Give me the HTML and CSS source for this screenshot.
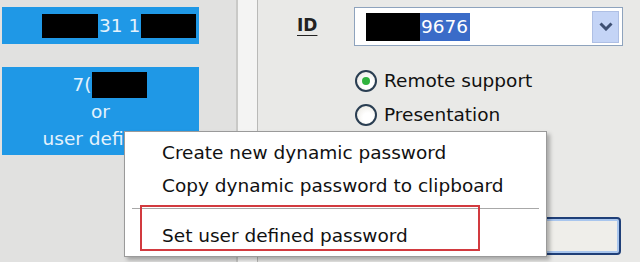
FILE: index.html
```html
<!DOCTYPE html>
<html>
<head>
<meta charset="utf-8">
<link rel="stylesheet" href="styles.css">
</head>
<body>
<div class="app">
  <div class="left-panel">
    <div class="blue-box box-id">
      <span class="redact r1"></span><span class="bt">31 1</span><span class="redact r2"></span>
    </div>
    <div class="blue-box box-pw">
      <div class="line first"><span class="bt">7(</span><span class="redact r3"></span></div>
      <div class="line">or</div>
      <div class="line">user defined</div>
    </div>
  </div>
  <div class="strip"></div>
  <div class="main">
    <div class="id-row">
      <span class="id-label">ID</span>
      <div class="combo">
        <div class="sel"><span class="redact r4"></span><span class="sel-text">9676</span></div>
        <div class="drop">
          <svg width="14" height="9" viewBox="0 0 14 9"><path d="M1.5 1.5 L7 7 L12.5 1.5" fill="none" stroke="#3d4f72" stroke-width="3"/></svg>
        </div>
      </div>
    </div>
    <div class="radios">
      <div class="radio-row"><span class="radio checked"></span><span class="rlabel">Remote support</span></div>
      <div class="radio-row"><span class="radio"></span><span class="rlabel">Presentation</span></div>
    </div>
    <div class="btn-row"><div class="btn"></div></div>
  </div>
</div>
<div class="menu">
  <div class="item">Create new dynamic password</div>
  <div class="item">Copy dynamic password to clipboard</div>
  <div class="sep"></div>
  <div class="item">Set user defined password</div>
  <div class="highlight"></div>
</div>
</body>
</html>
```
FILE: styles.css
```css
html, body {
  margin: 0;
  padding: 0;
}
body {
  width: 640px;
  height: 262px;
  overflow: hidden;
  position: relative;
  background: #e9e9e7;
  font-family: "DejaVu Sans", sans-serif;
  font-size: 18.5px;
  color: #111;
}
.app {
  display: flex;
  height: 262px;
}
.left-panel {
  width: 234px;
  background: #e1e1e0;
  padding: 7px 0 0 2px;
  border-right: 2px solid #c9c9c7;
  display: flex;
  flex-direction: column;
  gap: 23px;
}
.blue-box {
  width: 197px;
  background: #1f98e6;
  color: #e4f2fc;
  box-sizing: border-box;
  white-space: nowrap;
}
.box-id {
  height: 37px;
  display: flex;
  align-items: center;
  padding-left: 40px;
}
.redact {
  display: inline-block;
  background: #000;
}
.r1 { width: 56px; height: 24px; margin-right: 1px; }
.r2 { width: 55px; height: 24px; margin-left: 1px; }
.box-pw {
  height: 88px;
  display: flex;
  flex-direction: column;
  align-items: center;
  padding-top: 4px;
  line-height: 28px;
}
.box-pw .line {
  display: flex;
  align-items: center;
  height: 27px;
}
.box-pw .first {
  padding-left: 18px;
}
.r3 { width: 55px; height: 26px; }
.strip {
  width: 19px;
  background: #f4f4f3;
  border-right: 1px solid #b9b9b7;
}
.main {
  flex: 1;
  display: flex;
  flex-direction: column;
  padding: 7px 17px 0 39px;
}
.id-row {
  display: flex;
  align-items: center;
  height: 39px;
}
.id-label {
  width: 57px;
  font-weight: bold;
  text-decoration: underline;
  text-underline-offset: 4px;
  color: #222;
  font-size: 17px;
  margin-top: -4px;
}
.combo {
  flex: 1;
  height: 39px;
  box-sizing: border-box;
  border: 1px solid #8ea3bd;
  background: #fff;
  display: flex;
  align-items: center;
  padding: 0 3px 0 11px;
}
.sel {
  display: flex;
  align-items: center;
  height: 28px;
  width: 104px;
  background: #3a6bc8;
  color: #fff;
}
.r4 { width: 54px; height: 28px; }
.sel-text { padding-left: 1px; }
.drop {
  margin-left: auto;
  width: 27px;
  height: 32px;
  box-sizing: border-box;
  background: #c4d4f6;
  border: 1px solid #aebfe4;
  display: flex;
  align-items: center;
  justify-content: center;
}
.radios {
  margin-top: 23px;
  padding-left: 58px;
  display: flex;
  flex-direction: column;
  gap: 11px;
}
.radio-row {
  display: flex;
  align-items: center;
  height: 23px;
}
.radio {
  width: 22px;
  height: 22px;
  box-sizing: border-box;
  border: 2px solid #2a3e52;
  border-radius: 50%;
  background: radial-gradient(circle at 60% 65%, #ffffff 30%, #e6e4dc 100%);
  margin-right: 7px;
  display: flex;
  align-items: center;
  justify-content: center;
}
.radio.checked::after {
  content: "";
  width: 8px;
  height: 8px;
  border-radius: 50%;
  background: #2fb23d;
}
.rlabel {
  color: #111;
}
.btn-row {
  margin-top: auto;
  margin-bottom: 7px;
  display: flex;
  justify-content: flex-end;
  padding-right: 2px;
}
.btn {
  width: 90px;
  height: 38px;
  box-sizing: border-box;
  border: 2px solid #1f3f78;
  border-radius: 4px;
  background: #efeeea;
  box-shadow: inset 0 0 0 2px #a9c6ee;
}
.menu {
  position: absolute;
  left: 124px;
  top: 131px;
  width: 423px;
  height: 126px;
  box-sizing: border-box;
  background: #fff;
  border: 1px solid #9a9a9a;
  box-shadow: 3px 3px 4px rgba(0,0,0,0.28);
  padding-top: 4px;
}
.item {
  padding-left: 37px;
  height: 33px;
  line-height: 33px;
  color: #111;
}
.sep {
  margin: 6px 7px 10px 7px;
  border-top: 1px solid #a8a8a8;
}
.highlight {
  position: absolute;
  left: 15px;
  top: 73px;
  width: 340px;
  height: 46px;
  box-sizing: border-box;
  border: 2px solid #d23a3f;
}
```
